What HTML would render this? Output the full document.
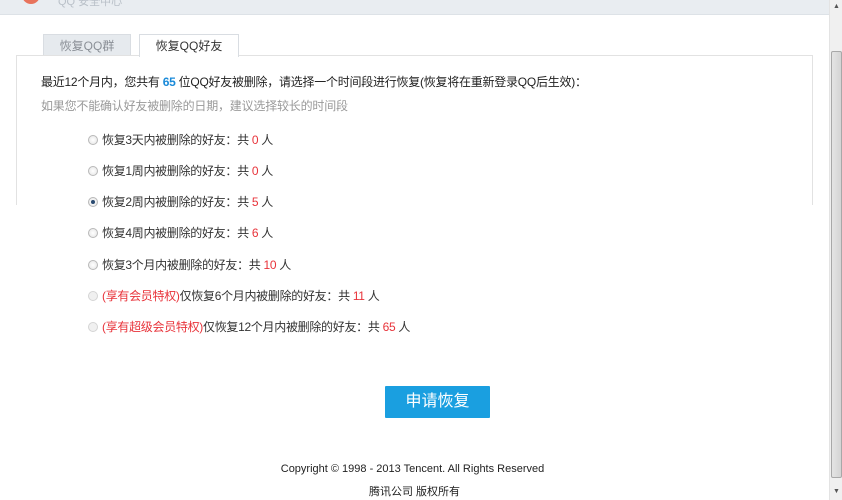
<!DOCTYPE html>
<html><head><meta charset="utf-8"><style>
*{margin:0;padding:0;box-sizing:border-box}
body{width:842px;height:500px;overflow:hidden;background:#fff;font-family:"Liberation Sans","Noto Sans CJK SC",sans-serif;font-size:12px;color:#333;position:relative}
.hdr{position:absolute;left:0;top:0;width:829px;height:15px;background:#e9edf1;border-bottom:1px solid #dde2e7}
.logo{position:absolute;left:22px;top:-8px;width:18px;height:12px;border-radius:0 0 9px 9px;background:#e8735c}
.htxt{position:absolute;left:58px;top:-7px;color:#b9c0c8;font-size:11px}
.sb{position:absolute;left:829px;top:0;width:13px;height:500px;background:#f0f0f0;border-left:1px solid #e3e3e3}
.thumb{position:absolute;left:1px;top:51px;width:11px;height:427px;background:linear-gradient(90deg,#e4e4e4,#d4d4d4);border:1px solid #a8a8a8;border-radius:2px}
.arr{position:absolute;left:3px;font-size:7px;color:#555}
.tab{position:absolute;top:34px;height:22px;border:1px solid #d9dde2;border-bottom:none;text-align:center;line-height:22px;font-size:12px}
.box{position:absolute;left:16px;top:55px;width:797px;height:150px;border:1px solid #e2e2e2;border-bottom:none}
.l1{position:absolute;left:41px;top:73px;color:#222;letter-spacing:-0.25px}
.l2{position:absolute;left:41px;top:97px;color:#999;letter-spacing:-0.2px}
.row{position:absolute;left:88px;height:16px;line-height:16px;color:#333;white-space:nowrap;letter-spacing:-0.3px}
.rad{display:inline-block;width:10px;height:10px;border-radius:50%;border:1px solid #b8b8b8;background:radial-gradient(#fff,#e4e4e4);vertical-align:-1px;margin-right:4px;position:relative}
.rad.on::after{content:"";position:absolute;left:2px;top:2px;width:4px;height:4px;border-radius:50%;background:#2a4a70}
.rad.dis{border-color:#d4d4d4;background:#f0f0f0}
.r{color:#e8333a}
.btn{position:absolute;left:385px;top:386px;width:105px;height:32px;background:#1a9fe0;color:#fff;font-size:16px;text-align:center;line-height:32px;border-radius:1px}
.ft{position:absolute;left:0;width:829px;text-align:center;color:#222;font-size:11px}
</style></head><body>
<div class="hdr"><div class="logo"></div><div class="htxt">QQ 安全中心</div></div>
<div class="tab" style="left:43px;width:88px;background:#e6eaee;color:#8a8f96">恢复QQ群</div>
<div class="tab" style="left:139px;width:100px;background:#fff;color:#333;height:23px;z-index:2">恢复QQ好友</div>
<div class="box"></div>
<div class="l1">最近12个月内，您共有 <b style="color:#1a8ad9">65</b> 位QQ好友被删除，请选择一个时间段进行恢复(恢复将在重新登录QQ后生效)：</div>
<div class="l2">如果您不能确认好友被删除的日期，建议选择较长的时间段</div>
<div class="row" style="top:132px"><span class="rad"></span>恢复3天内被删除的好友：共 <span class="r">0</span> 人</div>
<div class="row" style="top:163px"><span class="rad"></span>恢复1周内被删除的好友：共 <span class="r">0</span> 人</div>
<div class="row" style="top:194px"><span class="rad on"></span>恢复2周内被删除的好友：共 <span class="r">5</span> 人</div>
<div class="row" style="top:225px"><span class="rad"></span>恢复4周内被删除的好友：共 <span class="r">6</span> 人</div>
<div class="row" style="top:257px"><span class="rad"></span>恢复3个月内被删除的好友：共 <span class="r">10</span> 人</div>
<div class="row" style="top:288px"><span class="rad dis"></span><span class="r">(享有会员特权)</span>仅恢复6个月内被删除的好友：共 <span class="r">11</span> 人</div>
<div class="row" style="top:319px"><span class="rad dis"></span><span class="r">(享有超级会员特权)</span>仅恢复12个月内被删除的好友：共 <span class="r">65</span> 人</div>
<div class="btn">申请恢复</div>
<div class="ft" style="top:463px;left:-2px">Copyright © 1998 - 2013 Tencent. All Rights Reserved</div>
<div class="ft" style="top:483px">腾讯公司 版权所有</div>
<div class="sb"><div class="arr" style="top:3px">▲</div><div class="thumb"></div><div class="arr" style="top:488px">▼</div></div>
</body></html>
